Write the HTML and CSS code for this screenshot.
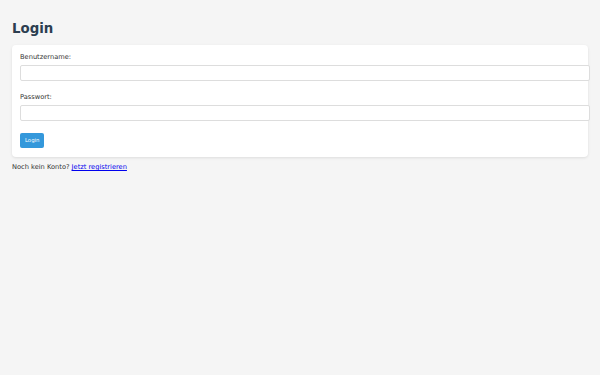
FILE: index.html
```html
<!DOCTYPE html>
<html lang="de">
<head>
<meta charset="utf-8">
<title>Login</title>
<link rel="stylesheet" href="styles.css">
</head>
<body>
<h1 class="title">Login</h1>
<form class="card">
  <div class="field">
    <label class="label" for="u">Benutzername:</label>
    <input class="input" id="u" type="text">
  </div>
  <div class="field">
    <label class="label" for="p">Passwort:</label>
    <input class="input" id="p" type="password">
  </div>
  <button class="btn" type="button">Login</button>
</form>
<p class="note">Noch kein Konto? <a class="link" href="#">Jetzt registrieren</a></p>
</body>
</html>
```
FILE: styles.css
```css
html, body {
  margin: 0;
  background: #f5f5f5;
}
body {
  padding: 21px 12px 0 12px;
  font-family: "DejaVu Sans", sans-serif;
  font-size: 6.67px;
  color: #333;
}
.title {
  margin: 0 0 8px 0;
  font-size: 13.33px;
  line-height: 16px;
  font-weight: bold;
  color: #2c3e50;
}
.card {
  background: #fff;
  border-radius: 4px;
  box-shadow: 0 1px 3px rgba(0,0,0,0.1);
  padding: 8px 8px 9px 8px;
  margin: 0;
}
.field {
  margin-bottom: 12px;
}
.label {
  display: block;
  line-height: 8px;
  margin-bottom: 4px;
}
.input {
  display: block;
  width: 100%;
  height: 14px;
  padding: 0 4px;
  margin: 0;
  border: 1px solid #ddd;
  border-radius: 2px;
  box-sizing: content-box;
  background: #fff;
  font-family: inherit;
  font-size: 6.67px;
}
.btn {
  display: block;
  background: #3498db;
  color: #fff;
  border: none;
  border-radius: 2px;
  font-family: inherit;
  font-size: 5.33px;
  line-height: 7px;
  padding: 4px 5px;
  margin: 0;
}
.note {
  margin: 6px 0 0 0;
  line-height: 8px;
}
.link {
  color: #0000ee;
}
```
